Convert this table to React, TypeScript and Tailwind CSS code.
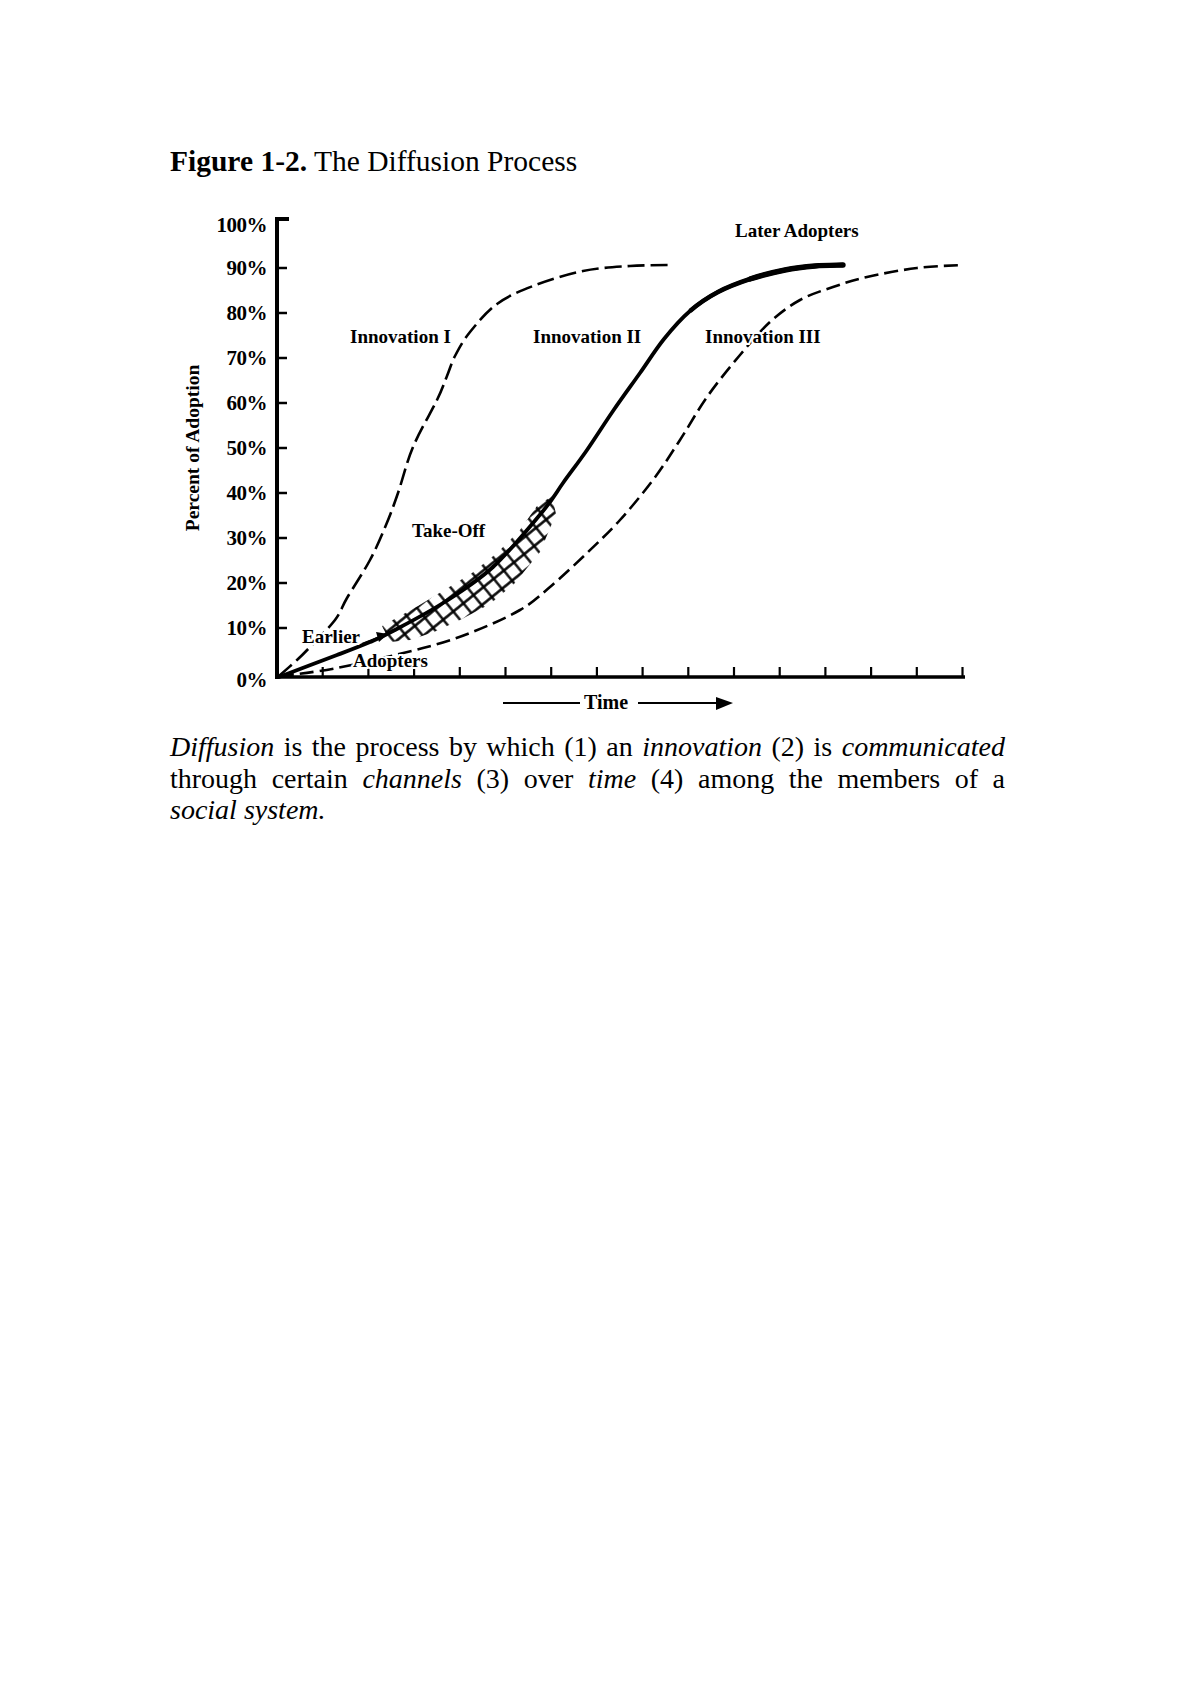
type Pt = [number, number];

// Catmull-Rom through the sampled points, turned into cubic beziers.
// from/to let a part of the curve be drawn with the same tangents as the whole.
function smooth(pts: Pt[], from = 0, to = pts.length - 1): string {
  let d = `M${pts[from][0]} ${pts[from][1]}`;
  for (let i = from; i < to; i++) {
    const p0 = pts[i - 1] || pts[i];
    const p1 = pts[i];
    const p2 = pts[i + 1];
    const p3 = pts[i + 2] || p2;
    const c1x = p1[0] + (p2[0] - p0[0]) / 6;
    const c1y = p1[1] + (p2[1] - p0[1]) / 6;
    const c2x = p2[0] - (p3[0] - p1[0]) / 6;
    const c2y = p2[1] - (p3[1] - p1[1]) / 6;
    d += ` C${c1x.toFixed(1)} ${c1y.toFixed(1)} ${c2x.toFixed(1)} ${c2y.toFixed(1)} ${p2[0]} ${p2[1]}`;
  }
  return d;
}

const innovationOne: Pt[] = [
  [279, 676], [297, 660], [310, 647], [335, 620], [347, 598], [370, 560],
  [386, 525], [398, 493], [413, 447], [437, 400], [447, 376], [455, 356],
  [470, 332], [497, 304], [533, 286], [583, 271], [630, 266], [672, 265],
];

const innovationTwo: Pt[] = [
  [279, 677], [337, 655], [370, 642], [393, 631], [443, 603], [493, 567],
  [543, 511], [563, 483], [587, 450], [613, 411], [640, 373], [664, 339],
  [690, 311], [718, 292], [750, 279], [785, 270], [815, 266], [843, 265],
];

const innovationThree: Pt[] = [
  [280, 676], [337, 668], [423, 648], [470, 633], [520, 610], [550, 587],
  [587, 553], [620, 520], [653, 480], [680, 440], [707, 397], [740, 355],
  [770, 322], [800, 300], [833, 287], [867, 277], [917, 268], [963, 265],
];

const yLabels = [
  { label: "100%", y: 225 },
  { label: "90%", y: 268 },
  { label: "80%", y: 313 },
  { label: "70%", y: 358 },
  { label: "60%", y: 403 },
  { label: "50%", y: 448 },
  { label: "40%", y: 493 },
  { label: "30%", y: 538 },
  { label: "20%", y: 583 },
  { label: "10%", y: 628 },
  { label: "0%", y: 680 },
];

const hatchArea: Pt[] = [
  [382, 626], [418, 606], [446, 589], [472, 573], [497, 553], [520, 530],
  [537, 506], [552, 496], [556, 514], [540, 552], [514, 584], [490, 604],
  [460, 620], [434, 632], [410, 640], [390, 642],
];

function DiffusionChart() {
  const xTicks = Array.from({ length: 15 }, (_, i) => 277 + 45.7 * (i + 1));
  const label = {
    fontWeight: 700,
    fontSize: 19,
    stroke: "#fff",
    strokeWidth: 4,
    paintOrder: "stroke",
  } as const;

  return (
    <svg
      className="mt-[22px] block"
      width="1190"
      height="520"
      viewBox="0 200 1190 520"
      fontFamily="'Liberation Serif', 'Times New Roman', serif"
    >
      <defs>
        <pattern
          id="hatch"
          width="13"
          height="13"
          patternUnits="userSpaceOnUse"
          patternTransform="rotate(-39)"
        >
          <path d="M0 6.5H13M6.5 0V13" stroke="#000" strokeWidth="2.3" />
        </pattern>
      </defs>

      {/* axes */}
      <path d="M277 217V679M275 219H289" stroke="#000" strokeWidth="4" fill="none" />
      {yLabels.slice(1, 10).map((t) => (
        <line key={t.label} x1="277" x2="287" y1={t.y} y2={t.y} stroke="#000" strokeWidth="2.5" />
      ))}
      <line x1="275" x2="965" y1="677" y2="677" stroke="#000" strokeWidth="3.5" />
      {xTicks.map((x) => (
        <line key={x} x1={x} x2={x} y1="667" y2="677" stroke="#000" strokeWidth="2.2" />
      ))}

      {/* take-off cross hatch */}
      <polygon points={hatchArea.map((p) => p.join(",")).join(" ")} fill="url(#hatch)" />

      {/* curves */}
      <path d={smooth(innovationOne)} fill="none" stroke="#000" strokeWidth="2.6" strokeDasharray="17 6" />
      <path d={smooth(innovationThree)} fill="none" stroke="#000" strokeWidth="2.6" strokeDasharray="14 6" />
      <path d={smooth(innovationTwo)} fill="none" stroke="#000" strokeWidth="3.8" strokeLinecap="round" />
      <path d={smooth(innovationTwo, 12)} fill="none" stroke="#000" strokeWidth="4.5" strokeLinecap="butt" />
      <path d={smooth(innovationTwo, 14)} fill="none" stroke="#000" strokeWidth="5.4" strokeLinecap="round" />

      {/* little arrow from "Earlier" */}
      <path d="M362 644 L380 637" stroke="#000" strokeWidth="2" />
      <path d="M376 632 L388 634 L379 642 Z" fill="#000" />

      {/* tick labels */}
      <g fontWeight="700" fontSize="21" textAnchor="end">
        {yLabels.map((t) => (
          <text key={t.label} x="267" y={t.y + 7} letterSpacing="-0.5">
            {t.label}
          </text>
        ))}
      </g>
      <text
        transform="translate(199 448) rotate(-90)"
        textAnchor="middle"
        fontWeight="700"
        fontSize="19.5"
      >
        Percent of Adoption
      </text>

      {/* curve labels */}
      <text x="350" y="343" {...label}>Innovation I</text>
      <text x="533" y="343" {...label}>Innovation II</text>
      <text x="705" y="343" {...label}>Innovation III</text>
      <text x="735" y="237" {...label}>Later Adopters</text>
      <text x="412" y="537" {...label}>Take-Off</text>
      <text x="302" y="643" {...label}>Earlier</text>
      <text x="353" y="667" {...label}>Adopters</text>

      {/* time arrow */}
      <line x1="503" x2="580" y1="703" y2="703" stroke="#000" strokeWidth="2" />
      <text x="584" y="709" fontWeight="700" fontSize="20">Time</text>
      <line x1="638" x2="722" y1="703" y2="703" stroke="#000" strokeWidth="2" />
      <path d="M716 697 L733 703 L716 710 Z" fill="#000" />
    </svg>
  );
}

export default function App() {
  return (
    <div className="w-[1190px] h-[1684px] bg-white pt-[145px] text-black font-['Liberation_Serif','Times_New_Roman',serif]">
      <h1 className="ml-[170px] text-[29.5px] leading-[33px] font-normal">
        <span className="font-bold">Figure 1-2.</span> The Diffusion Process
      </h1>

      <DiffusionChart />

      <div className="ml-[170px] mt-[11px] w-[835px] text-[28px] leading-[31.5px]">
        <p className="text-justify [text-align-last:justify]">
          <i>Diffusion</i> is the process by which (1) an <i>innovation</i> (2) is <i>communicated</i>
        </p>
        <p className="text-justify [text-align-last:justify]">
          through certain <i>channels</i> (3) over <i>time</i> (4) among the members of a
        </p>
        <p>
          <i>social system.</i>
        </p>
      </div>
    </div>
  );
}
